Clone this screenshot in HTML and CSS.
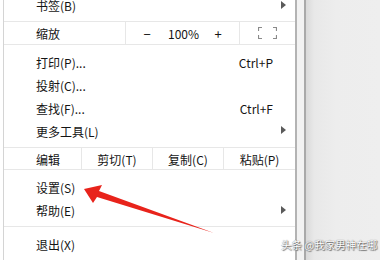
FILE: index.html
```html
<!DOCTYPE html>
<html lang="zh-CN">
<head>
<meta charset="utf-8">
<link rel="stylesheet" href="styles.css">
</head>
<body>
<div class="page">
  <div class="left-gap"></div>
  <div class="menu">
    <div class="list first">
      <div class="item"><span class="label">书签(B)</span><span class="sub"></span></div>
    </div>
    <div class="row zoom">
      <div class="cell name">缩放</div>
      <div class="cell zoom-ctrl">
        <span class="zbtn">−</span>
        <span class="zval">100%</span>
        <span class="zbtn">+</span>
      </div>
      <div class="cell full">
        <svg width="19" height="12" viewBox="0 0 19 12" class="full-icon">
          <path d="M0.5 4V0.5H4M15 0.5H18.5V4M18.5 8V11.5H15M4 11.5H0.5V8" fill="none" stroke="#8a8a8a" stroke-width="1.2"/>
        </svg>
      </div>
    </div>
    <div class="list">
      <div class="item"><span class="label">打印(P)...</span><span class="key">Ctrl+P</span></div>
      <div class="item"><span class="label">投射(C)...</span></div>
      <div class="item"><span class="label">查找(F)...</span><span class="key">Ctrl+F</span></div>
      <div class="item"><span class="label">更多工具(L)</span><span class="sub"></span></div>
    </div>
    <div class="row edit">
      <div class="cell name">编辑</div>
      <div class="cell ebtn">剪切(T)</div>
      <div class="cell ebtn">复制(C)</div>
      <div class="cell ebtn last">粘贴(P)</div>
    </div>
    <div class="list">
      <div class="item"><span class="label">设置(S)</span></div>
      <div class="item"><span class="label">帮助(E)</span><span class="sub"></span></div>
    </div>
    <div class="list sep-top">
      <div class="item"><span class="label">退出(X)</span></div>
    </div>
  </div>
  <div class="gutter"></div>
  <div class="edge"></div>
  <div class="backdrop"></div>
</div>
<svg class="arrow" width="380" height="260" viewBox="0 0 380 260">
  <polygon points="84,189 102,185 99,191 214,233 97,197 93,203" fill="#e8231b"/>
</svg>
<div class="watermark">头条 @我家男神在哪</div>
</body>
</html>
```
FILE: styles.css
```css
html, body {
  margin: 0;
  padding: 0;
  width: 380px;
  height: 260px;
  overflow: hidden;
  background: #ffffff;
  font-family: "Noto Sans CJK SC", "Microsoft YaHei", sans-serif;
  font-size: 12px;
  color: #141414;
}
* {
  box-sizing: border-box;
}
.page {
  display: flex;
  height: 260px;
}
.left-gap {
  width: 3px;
  flex: none;
  background: #ffffff;
}
.menu {
  width: 294px;
  flex: none;
  border-left: 1px solid #d4d4d4;
  border-right: 2px solid #b3b3b3;
  background: #ffffff;
  margin-top: -7px;
  display: flex;
  flex-direction: column;
}
.list {
  padding: 5px 0;
}
.list.first {
  padding-top: 0;
}
.list.sep-top {
  border-top: 1px solid #e7e7e7;
}
.item {
  height: 23px;
  display: flex;
  align-items: center;
  padding-left: 32px;
  padding-right: 22px;
  padding-top: 2px;
}
.label {
  flex: 1;
}
.key {
  font-size: 12px;
}
.sub {
  width: 0;
  height: 0;
  border-left: 5px solid #5a5a5a;
  border-top: 4px solid transparent;
  border-bottom: 4px solid transparent;
  margin-right: -13px;
  margin-top: -2px;
}
.row {
  height: 25px;
  display: flex;
  border-top: 1px solid #e7e7e7;
  border-bottom: 1px solid #e7e7e7;
}
.cell {
  display: flex;
  align-items: center;
  padding-top: 2px;
}
.name {
  padding-left: 32px;
}
.zoom .name {
  width: 122px;
  border-right: 1px solid #e7e7e7;
}
.zoom-ctrl {
  width: 114px;
  border-right: 1px solid #e7e7e7;
}
.zbtn {
  width: 42px;
  text-align: center;
  font-size: 13px;
}
.zval {
  width: 29px;
  text-align: center;
}
.full {
  flex: 1;
  justify-content: center;
  padding-top: 0;
}
.edit .name {
  width: 78px;
  border-right: 1px solid #e7e7e7;
}
.ebtn {
  width: 71px;
  justify-content: center;
  border-right: 1px solid #e7e7e7;
}
.ebtn.last {
  flex: 1;
  border-right: none;
}
.gutter {
  width: 7px;
  flex: none;
  background: #f2f2f2;
}
.edge {
  width: 2px;
  flex: none;
  background: #a9a9a9;
}
.backdrop {
  flex: 1;
  background: linear-gradient(to right, #d9d9d9 0px, #e8e8e8 8px, #ededed 30px, #eeeeee 100%);
}
.arrow {
  position: absolute;
  left: 0;
  top: 0;
}
.watermark {
  position: absolute;
  left: 281px;
  top: 238px;
  font-size: 10.5px;
  line-height: 13px;
  white-space: nowrap;
  color: #ffffff;
  text-shadow: 0 0 1px #555, 1px 1px 1px #666;
}
```
